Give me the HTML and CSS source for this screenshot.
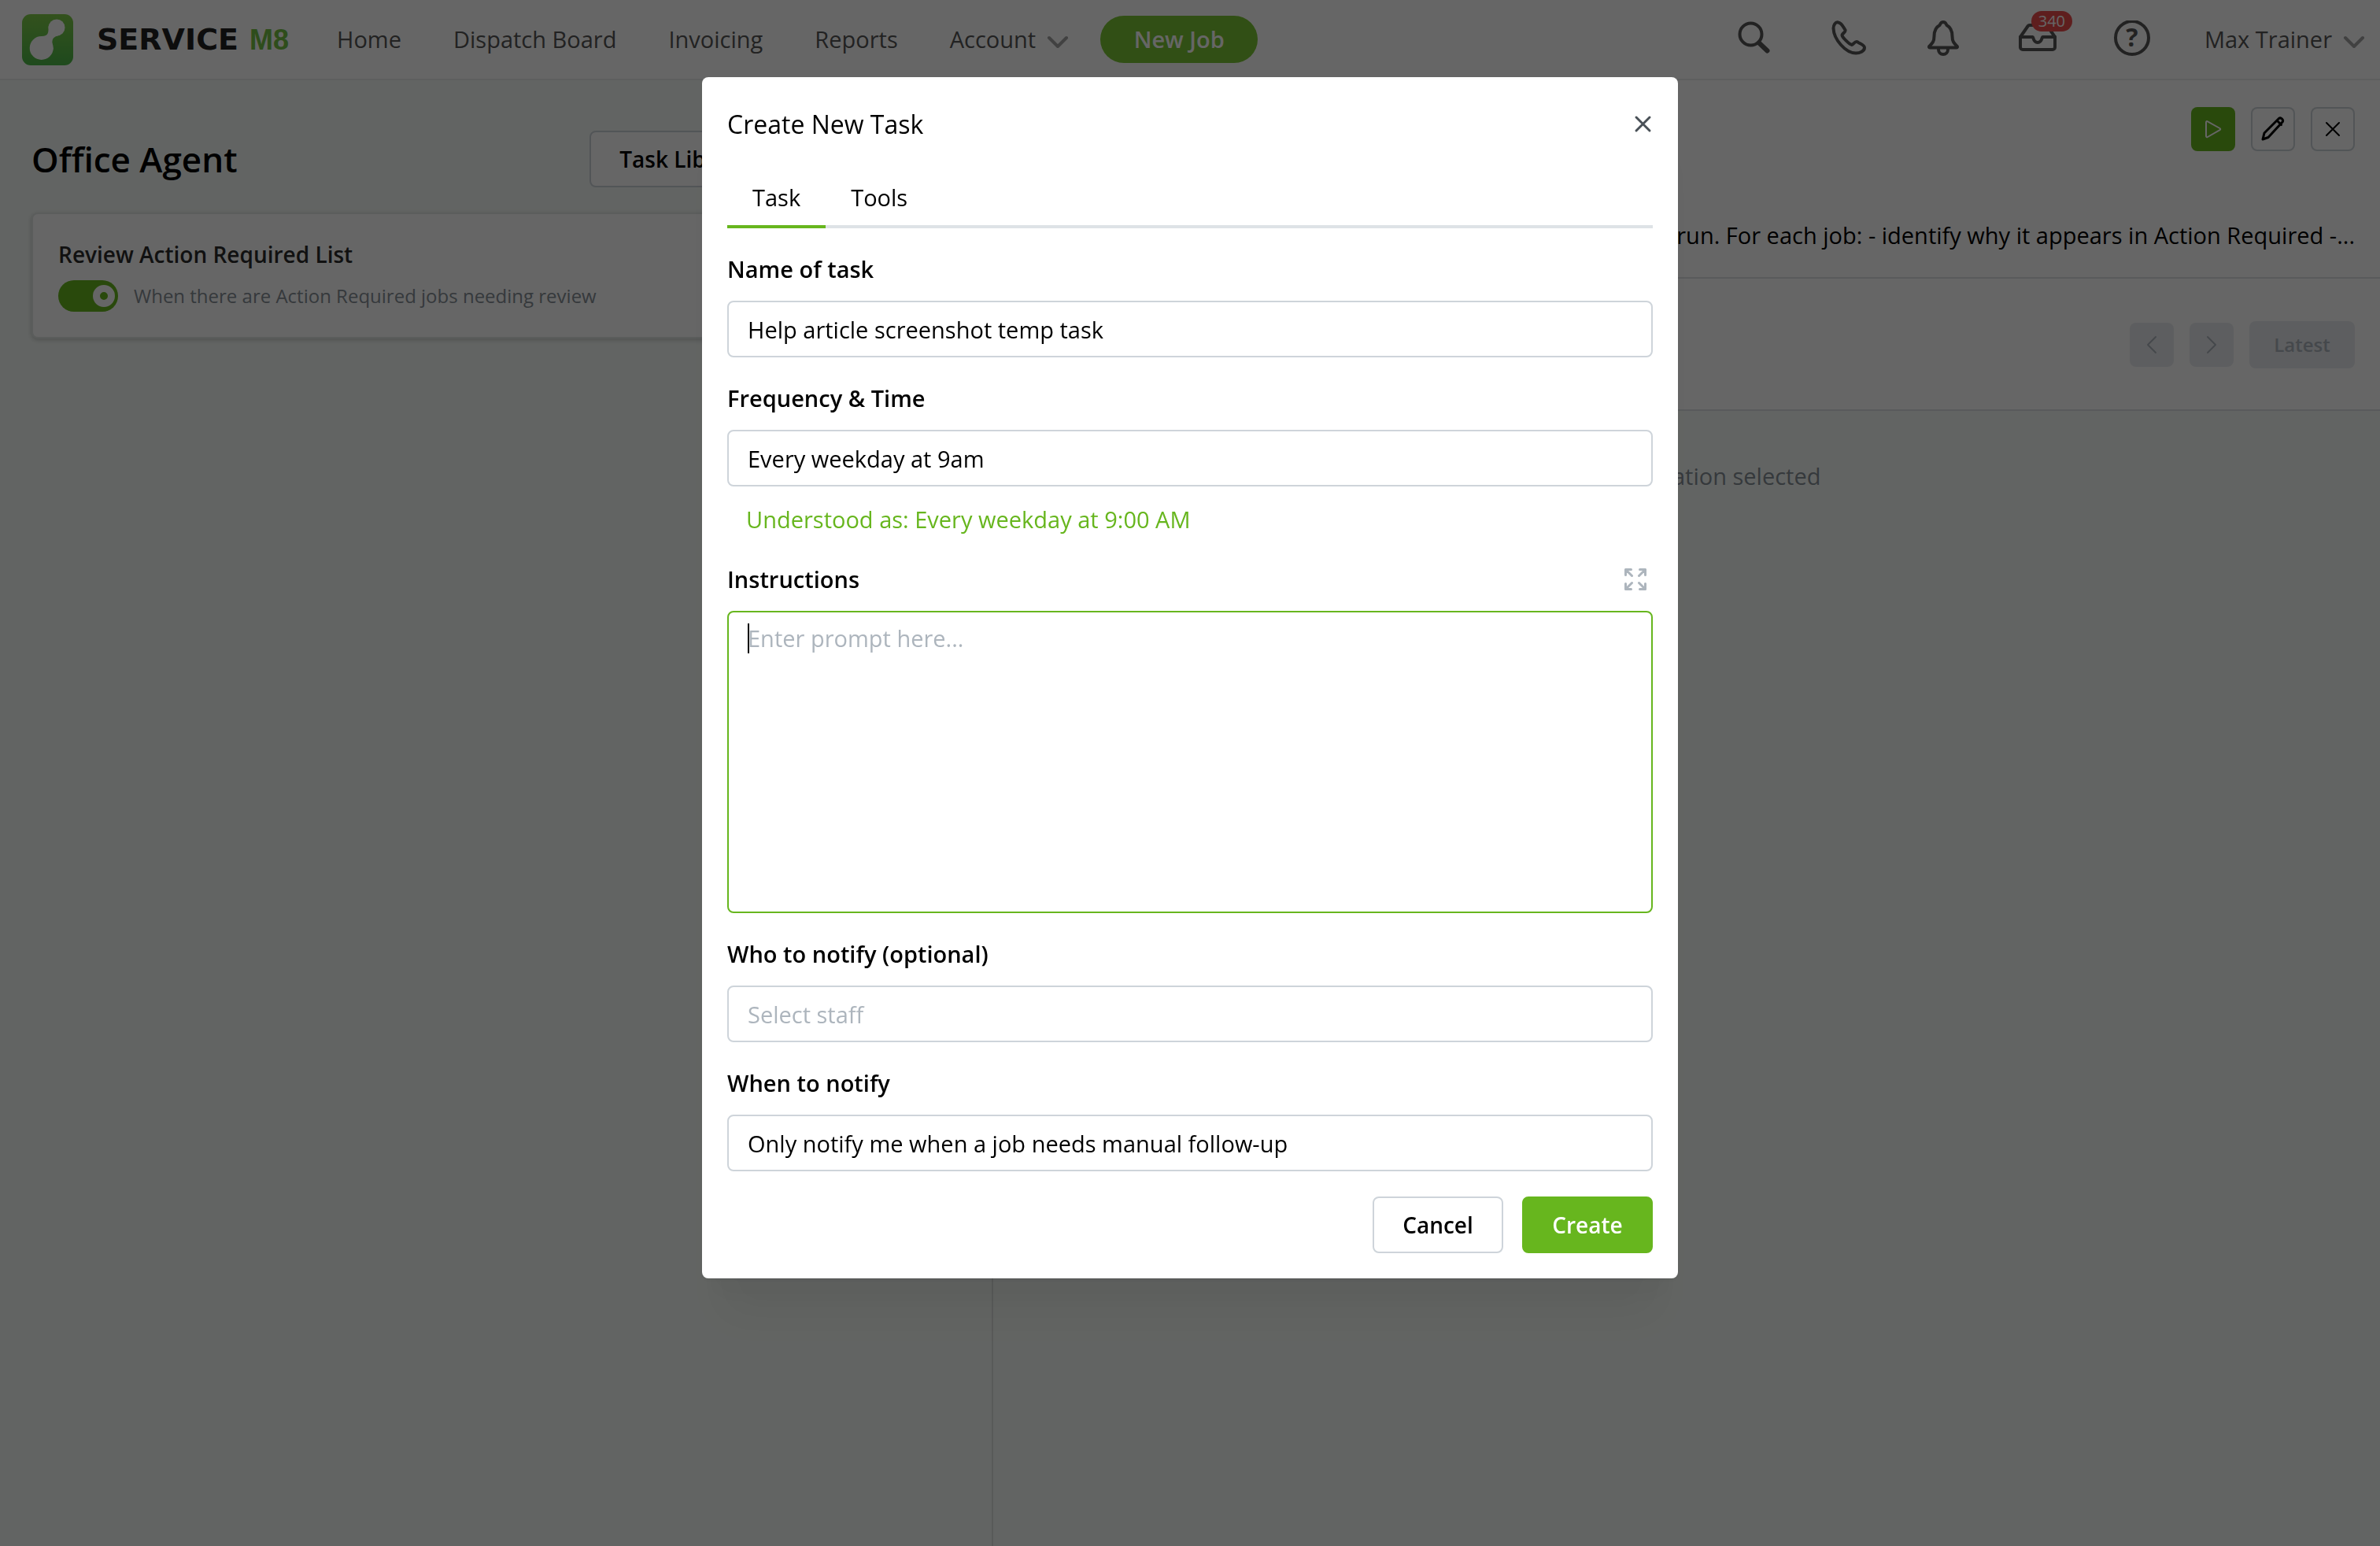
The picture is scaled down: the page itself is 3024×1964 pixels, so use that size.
FILE: index.html
```html
<!DOCTYPE html>
<html lang="en">

<head>
    <meta charset="UTF-8">
    <title>Office Agent</title>
    <link rel="stylesheet" href="styles.css">
</head>

<body>
    <header class="topbar">
        <a href="#" class="brand">
            <svg class="brand-mark" viewBox="0 0 65 65" aria-hidden="true">
                <defs>
                    <linearGradient id="brandFill" x1="0" y1="0" x2="0" y2="1">
                        <stop offset="0" stop-color="#80cc4a" />
                        <stop offset="1" stop-color="#4db84a" />
                    </linearGradient>
                </defs>
                <rect width="65" height="65" rx="11" fill="url(#brandFill)" />
                <circle cx="44" cy="17" r="10.5" fill="#fff" />
                <circle cx="24.7" cy="43" r="15" fill="#fff" />
                <path d="M33.6 15C33.5 23 34 28 25 28L20 40L36 52L39.7 44C38 36 36.5 29 46 27.4Z" fill="#fff" />
            </svg>
            <span class="brand-name">SERVICE<span class="brand-suffix">M8</span></span>
        </a>
        <nav class="nav">
            <a href="#">Home</a>
            <a href="#">Dispatch Board</a>
            <a href="#">Invoicing</a>
            <a href="#">Reports</a>
            <a href="#" class="with-chevron">Account
                <svg class="chevron" viewBox="0 0 28 16" aria-hidden="true"><path d="M3 3l11 11L25 3" /></svg>
            </a>
        </nav>
        <button class="new-job" type="button">New Job</button>
        <div class="tools">
            <button class="icon-btn" type="button" aria-label="Search">
                <svg viewBox="0 0 48 48">
                    <circle cx="19.5" cy="17.5" r="14" />
                    <path d="M30 28.500l10.500 10" stroke-width="6" />
                </svg>
            </button>
            <button class="icon-btn" type="button" aria-label="Phone">
                <svg viewBox="0 0 48 48">
                    <path d="M10.600 2.500C7 1.500 4.500 6 4.500 10C5 24 20 41.500 33 41.500C38 41.500 44 39 44 34.500C44 31 38 29.500 35.500 27.500C32 25.500 30.500 30 28 31C25 30.500 15.500 21.500 15.500 18.500C16 16 20.500 15 19.500 12C17.500 9 15 3 10.600 2.500Z" />
                </svg>
            </button>
            <button class="icon-btn" type="button" aria-label="Notifications">
                <svg viewBox="0 0 48 48">
                    <path d="M24 2C21 2 20.500 4 19.500 6C14 9 12.500 14 12.500 20C12.500 27 10 29 6.500 32.500C5.500 33.500 6 34.500 7 34.500H41C42 34.500 42.500 33.500 41.500 32.500C38 29 35.500 27 35.500 20C35.500 14 34 9 28.500 6C27.500 4 27 2 24 2Z" />
                    <path d="M18 35v2a6 6 0 0 0 12 0v-2" />
                </svg>
            </button>
            <button class="icon-btn" type="button" aria-label="Inbox">
                <svg viewBox="0 0 48 48">
                    <path d="M2 21L11 8q1-2 3-2h20q2 0 3 2L46 21V34a3 3 0 0 1-3 3H5a3 3 0 0 1-3-3Z" />
                    <path d="M2 21H17.500C19 21 18 28 24 28S29 21 30.500 21H46" />
                </svg>
                <span class="badge">340</span>
            </button>
            <button class="icon-btn" type="button" aria-label="Help">
                <svg viewBox="0 0 48 48">
                    <circle cx="24" cy="22" r="21" />
                    <text x="24" y="33" text-anchor="middle">?</text>
                </svg>
            </button>
        </div>
        <a href="#" class="user with-chevron">Max Trainer
            <svg class="chevron" viewBox="0 0 28 16" aria-hidden="true"><path d="M3 3l11 11L25 3" /></svg>
        </a>
    </header>

    <main class="page">
        <section class="agent">
            <div class="agent-head">
                <h1>Office Agent</h1>
                <div class="agent-actions">
                    <button class="btn" type="button">Task Library</button>
                    <button class="btn btn-primary" type="button">New Task</button>
                </div>
            </div>
            <article class="card">
                <h2>Review Action Required List</h2>
                <label class="card-row">
                    <input type="checkbox" role="switch" class="switch" checked>
                    When there are Action Required jobs needing review
                </label>
            </article>
        </section>

        <section class="detail">
            <div class="detail-head">
                <div class="detail-actions">
                    <button class="square square-run" type="button" aria-label="Run">
                        <svg viewBox="0 0 56 56"><path d="M19 19.500c0-1.500 1-2 2-1.200L36.500 27c1 .7 1 1.500 0 2.200L21 38c-1 .7-2 .2-2-1.200Z" /></svg>
                    </button>
                    <button class="square" type="button" aria-label="Edit">
                        <svg viewBox="0 0 56 56" stroke-width="3"><path d="M15 41l2-8L35.500 14.500q2-1.500 4 .5t.5 4L22 38.500ZM33 17l5.500 5.500" /></svg>
                    </button>
                    <button class="square" type="button" aria-label="Close">
                        <svg viewBox="0 0 56 56"><path d="M20 20l16 16M36 20L20 36" /></svg>
                    </button>
                </div>
                <p class="detail-text">Review the Action Required list on every run. For each job: - identify why it appears in Action Required -...</p>
            </div>
            <div class="pager">
                <button class="square" type="button" aria-label="Previous" disabled>
                    <svg viewBox="0 0 56 56"><path d="M33 18L23 28l10 10" /></svg>
                </button>
                <button class="square" type="button" aria-label="Next" disabled>
                    <svg viewBox="0 0 56 56"><path d="M23 18l10 10L23 38" /></svg>
                </button>
                <button class="latest" type="button" disabled>Latest</button>
            </div>
            <p class="empty">No conversation selected</p>
        </section>
    </main>

    <div class="overlay">
        <form class="modal" role="dialog" aria-labelledby="modalTitle">
            <div class="modal-head">
                <h2 id="modalTitle">Create New Task</h2>
                <button class="close" type="button" aria-label="Close">
                    <svg viewBox="0 0 24 24"><path d="M3 3l17 17M20 3L3 20" /></svg>
                </button>
            </div>

            <div class="tabs" role="tablist">
                <button class="tab active" type="button" role="tab" aria-selected="true">Task</button>
                <button class="tab" type="button" role="tab" aria-selected="false">Tools</button>
            </div>

            <div class="field">
                <label for="taskName">Name of task</label>
                <input type="text" id="taskName" value="Help article screenshot temp task">
            </div>
            <div class="field">
                <label for="frequency">Frequency &amp; Time</label>
                <input type="text" id="frequency" value="Every weekday at 9am">
                <p class="hint">Understood as: Every weekday at 9:00 AM</p>
            </div>
            <div class="field">
                <div class="label-row">
                    <label for="instructions">Instructions</label>
                    <button class="expand" type="button" aria-label="Expand">
                        <svg viewBox="0 0 28 28">
                            <path d="M1.500 8.500v-7h7M1.500 1.500l8 8M19.500 1.500h7v7M26.500 1.500l-8 8M1.500 19.500v7h7M1.500 26.500l8-8M19.500 26.500h7v-7M26.500 26.500l-8-8" />
                        </svg>
                    </button>
                </div>
                <textarea id="instructions" placeholder="Enter prompt here..." autofocus></textarea>
            </div>
            <div class="field">
                <label for="staff">Who to notify (optional)</label>
                <input type="text" id="staff" placeholder="Select staff">
            </div>
            <div class="field">
                <label for="notify">When to notify</label>
                <input type="text" id="notify" value="Only notify me when a job needs manual follow-up">
            </div>

            <div class="modal-foot">
                <button class="btn" type="button">Cancel</button>
                <button class="btn btn-primary" type="submit">Create</button>
            </div>
        </form>
    </div>
</body>

</html>
```

FILE: styles.css
```css
*,
*::before {
    box-sizing: border-box;
}

body {
    margin: 0;
    min-height: 100vh;
    display: flex;
    flex-direction: column;
    font-family: "Open Sans", "Noto Sans", sans-serif;
    font-size: 29px;
    line-height: 38px;
    color: #000;
    background-color: #f6fbf8;
}

h1,
h2,
p {
    margin: 0;
}

button,
input,
textarea {
    font: inherit;
    color: inherit;
}

button {
    padding: 0;
    border: none;
    background: none;
    cursor: pointer;
}

a {
    color: inherit;
    text-decoration: none;
}

svg {
    display: block;
    fill: none;
    stroke: currentColor;
    stroke-linecap: round;
    stroke-linejoin: round;
}

/* Top bar */
.topbar {
    display: flex;
    align-items: center;
    height: 102px;
    padding: 0 19px 0 28px;
    border-bottom: 2px solid #eceeed;
    background-color: #fff;
    color: #555;
    font-weight: 500;
}

.brand {
    display: flex;
    align-items: center;
    gap: 30px;
}

.brand-mark {
    width: 65px;
    height: 65px;
    stroke: none;
}

.brand-name {
    display: flex;
    align-items: baseline;
    justify-content: space-between;
    width: 244px;
    font-family: "DejaVu Sans", sans-serif;
    font-size: 38px;
    font-weight: bold;
    color: #222;
}

.brand-suffix {
    font-family: "Liberation Sans Narrow", "Liberation Sans", sans-serif;
    font-size: 36px;
    color: #74c044;
}

.nav {
    display: flex;
    gap: 66px;
    margin-left: 61px;
}

.with-chevron {
    display: flex;
    align-items: center;
    gap: 14px;
}

.chevron {
    width: 28px;
    height: 16px;
    margin-top: 6px;
    stroke: #a2a2a2;
    stroke-width: 4;
}

.new-job {
    width: 200px;
    height: 60px;
    margin-left: 40px;
    border-radius: 30px;
    background-color: #7bc535;
    color: #fff;
    font-weight: 600;
}

.tools {
    display: flex;
    gap: 72px;
    margin-left: auto;
}

.icon-btn {
    position: relative;
    width: 48px;
    height: 48px;
}

.icon-btn svg {
    stroke-width: 4;
}

.icon-btn text {
    fill: currentColor;
    stroke: none;
    font-size: 32px;
    font-weight: bold;
}

.badge {
    position: absolute;
    top: -12px;
    left: 16px;
    width: 52px;
    height: 26px;
    border-radius: 13px;
    background-color: #eb4b4b;
    color: #fff;
    font-size: 20px;
    line-height: 26px;
}

.user {
    margin-left: 68px;
}

/* Page */
.page {
    flex: 1;
    display: grid;
    grid-template-columns: 5fr 7fr;
}

.agent {
    padding: 64px 40px;
}

.agent-head {
    display: flex;
    align-items: center;
    justify-content: space-between;
    margin-bottom: 32px;
}

.agent-head h1 {
    font-size: 44px;
    font-weight: 600;
    line-height: 60px;
}

.agent-actions {
    display: flex;
    gap: 24px;
}

.btn {
    min-width: 166px;
    height: 72px;
    padding: 0 36px;
    border: 2px solid #ced4da;
    border-radius: 8px;
    background-color: #fff;
    font-size: 28px;
    font-weight: 600;
}

.btn-primary {
    border-color: #67b61e;
    background-color: #67b61e;
    color: #fff;
}

.card {
    padding: 32px;
    border: 2px solid #e4e9e6;
    border-radius: 8px;
    background-color: #fff;
    box-shadow: 0 2px 6px rgba(0, 0, 0, 0.2);
}

.card h2 {
    margin-bottom: 14px;
    font-size: 28px;
    font-weight: 600;
    color: #2b2b2b;
}

.card-row {
    display: flex;
    align-items: center;
    gap: 20px;
    font-size: 24px;
    color: #868e96;
}

.switch {
    appearance: none;
    display: flex;
    align-items: center;
    justify-content: flex-end;
    width: 76px;
    height: 40px;
    margin: 0;
    padding: 0 4px;
    border-radius: 20px;
    background-color: #67b61e;
}

.switch::before {
    content: "";
    width: 28px;
    height: 28px;
    border: 9px solid #fff;
    border-radius: 50%;
}

.detail {
    border-left: 2px solid #dde1df;
}

.detail-head {
    padding: 34px 32px;
    border-bottom: 2px solid #dee2e6;
    background-color: #fff;
}

.detail-actions {
    display: flex;
    justify-content: flex-end;
    gap: 20px;
    margin-bottom: 88px;
}

.detail-text {
    text-align: right;
    white-space: nowrap;
}

.square {
    width: 56px;
    height: 56px;
    border-radius: 8px;
    background-color: #fff;
    box-shadow: inset 0 0 0 2px #ced4da;
    stroke-width: 2;
}

.square-run {
    background-color: #67b61e;
    box-shadow: none;
    color: #fff;
}

.pager {
    display: flex;
    align-items: center;
    justify-content: flex-end;
    gap: 20px;
    padding: 54px 32px 52px;
    border-bottom: 2px solid #dee2e6;
    background-color: #fff;
}

.pager button {
    background-color: #e9ecef;
    box-shadow: none;
    color: #adb5bd;
}

.latest {
    width: 134px;
    height: 60px;
    border-radius: 8px;
    font-size: 24px;
    font-weight: 600;
}

.empty {
    padding-top: 64px;
    text-align: center;
    color: #868e96;
}

/* Modal */
.overlay {
    position: fixed;
    inset: 0;
    display: flex;
    align-items: flex-start;
    justify-content: center;
    padding-top: 98px;
    background-color: rgba(0, 0, 0, 0.6);
}

.modal {
    width: 1240px;
    max-width: 90%;
    padding: 36px 32px 32px;
    border-radius: 8px;
    background-color: #fff;
    box-shadow: 0 2px 6px rgba(0, 0, 0, 0.05), 0 72px 56px -14px rgba(0, 0, 0, 0.05), 0 34px 34px -14px rgba(0, 0, 0, 0.04);
}

.modal-head {
    display: flex;
    align-items: center;
    justify-content: space-between;
    margin-bottom: 34px;
}

.modal-head h2 {
    font-size: 32px;
    font-weight: 400;
    line-height: 48px;
}

.close {
    width: 24px;
    height: 24px;
    color: #495057;
}

.close svg {
    stroke-width: 3;
}

.tabs {
    display: flex;
    background: linear-gradient(#dee2e6, #dee2e6) bottom / 100% 4px no-repeat;
}

.tab {
    padding: 16px 32px;
    border-bottom: 4px solid transparent;
}

.tab.active {
    border-color: #67b61e;
}

.field {
    margin-top: 32px;
}

.field label {
    display: block;
    margin-bottom: 20px;
    font-weight: 600;
    line-height: 40px;
}

.field input,
.field textarea {
    display: block;
    width: 100%;
    height: 72px;
    padding: 0 24px;
    border: 2px solid #ced4da;
    border-radius: 8px;
    outline: none;
    background-color: #fff;
}

.field textarea {
    height: 384px;
    padding: 14px 24px;
    resize: none;
}

.field textarea:focus {
    border-color: #67b61e;
}

/* steady caret while the prompt is still empty */
.field textarea:focus:placeholder-shown {
    caret-color: transparent;
    background: #fff linear-gradient(#000, #000) 24px 14px / 2px 38px no-repeat;
}

.field ::placeholder {
    color: #adb5bd;
    opacity: 1;
}

.hint {
    margin-top: 20px;
    padding: 0 0 2px 24px;
    line-height: 44px;
    color: #67b61e;
}

.label-row {
    display: flex;
    justify-content: space-between;
}

.expand {
    width: 28px;
    height: 28px;
    margin: 6px 8px 0 0;
    color: #adb5bd;
}

.expand svg {
    stroke-width: 3;
}

.modal-foot {
    display: flex;
    justify-content: flex-end;
    gap: 24px;
    margin-top: 32px;
}
```
